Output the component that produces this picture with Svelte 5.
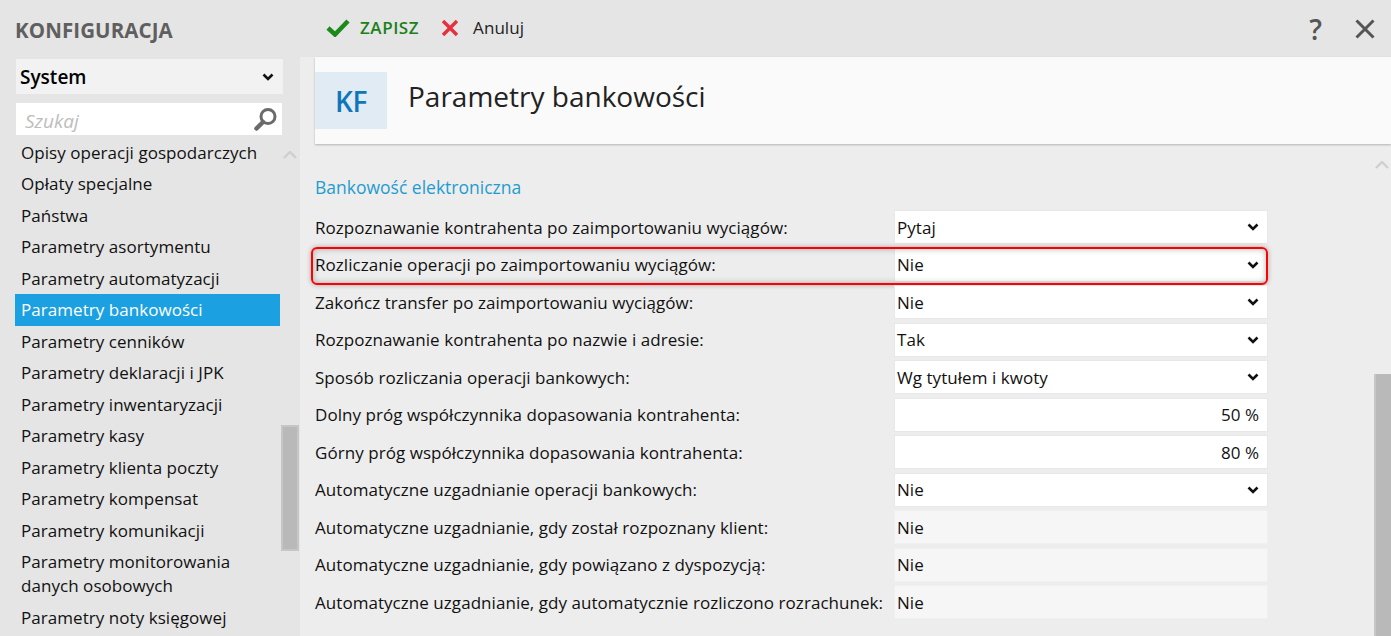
<script lang="ts">
  const menu = [
    'Opisy operacji gospodarczych',
    'Opłaty specjalne',
    'Państwa',
    'Parametry asortymentu',
    'Parametry automatyzacji',
    'Parametry bankowości',
    'Parametry cenników',
    'Parametry deklaracji i JPK',
    'Parametry inwentaryzacji',
    'Parametry kasy',
    'Parametry klienta poczty',
    'Parametry kompensat',
    'Parametry komunikacji',
    'Parametry monitorowania danych osobowych',
    'Parametry noty księgowej'
  ];

  const rows = [
    { label: 'Rozpoznawanie kontrahenta po zaimportowaniu wyciągów:', value: 'Pytaj', kind: 'select' },
    { label: 'Rozliczanie operacji po zaimportowaniu wyciągów:', value: 'Nie', kind: 'select', marked: true },
    { label: 'Zakończ transfer po zaimportowaniu wyciągów:', value: 'Nie', kind: 'select' },
    { label: 'Rozpoznawanie kontrahenta po nazwie i adresie:', value: 'Tak', kind: 'select' },
    { label: 'Sposób rozliczania operacji bankowych:', value: 'Wg tytułem i kwoty', kind: 'select' },
    { label: 'Dolny próg współczynnika dopasowania kontrahenta:', value: '50 %', kind: 'number' },
    { label: 'Górny próg współczynnika dopasowania kontrahenta:', value: '80 %', kind: 'number' },
    { label: 'Automatyczne uzgadnianie operacji bankowych:', value: 'Nie', kind: 'select' },
    { label: 'Automatyczne uzgadnianie, gdy został rozpoznany klient:', value: 'Nie', kind: 'readonly' },
    { label: 'Automatyczne uzgadnianie, gdy powiązano z dyspozycją:', value: 'Nie', kind: 'readonly' },
    { label: 'Automatyczne uzgadnianie, gdy automatycznie rozliczono rozrachunek:', value: 'Nie', kind: 'readonly' }
  ];
</script>

<div class="window">
  <aside class="sidebar">
    <h2>KONFIGURACJA</h2>
    <div class="module">
      <span>System</span>
      <svg class="chev" width="12" height="8" viewBox="0 0 12 8"><path d="M1.5 1.5 6 6l4.5-4.5" /></svg>
    </div>
    <div class="search">
      <span>Szukaj</span>
      <svg width="26" height="26" viewBox="0 0 26 26">
        <circle cx="15" cy="10.5" r="7" fill="none" stroke="#6a6a6a" stroke-width="3" />
        <path d="M10 16 3.5 22.5" stroke="#6a6a6a" stroke-width="4.5" stroke-linecap="round" />
      </svg>
    </div>
    <div class="list">
      <ul>
        {#each menu as item}
          <li class:active={item === 'Parametry bankowości'}>{item}</li>
        {/each}
      </ul>
      <div class="side-scroll">
        <svg class="up" width="14" height="8" viewBox="0 0 14 8"><path d="M1 7l6-6 6 6" /></svg>
        <div class="side-thumb"></div>
      </div>
    </div>
  </aside>

  <main class="content">
    <div class="toolbar">
      <button class="save">
        <svg width="24" height="18" viewBox="0 0 24 18"><path d="M2 9l7 6.5L22 2" /></svg>
        ZAPISZ
      </button>
      <button class="cancel">
        <svg width="18" height="18" viewBox="0 0 18 18"><path d="M2 2l14 14M16 2 2 16" /></svg>
        Anuluj
      </button>
      <div class="win-actions">
        <span class="help">?</span>
        <svg width="20" height="20" viewBox="0 0 20 20"><path d="M1.5 1.5l17 17M18.5 1.5l-17 17" /></svg>
      </div>
    </div>

    <div class="body">
      <header class="title">
        <div class="tile">KF</div>
        <h1>Parametry bankowości</h1>
      </header>

      <div class="form-wrap">
        <section class="form">
          <h3>Bankowość elektroniczna</h3>
          {#each rows as row}
            <div class="row" class:marked={row.marked}>
              <label>{row.label}</label>
              <div class="field {row.kind}">
                <span>{row.value}</span>
                {#if row.kind === 'select'}
                  <svg class="chev" width="12" height="8" viewBox="0 0 12 8"><path d="M1.5 1.5 6 6l4.5-4.5" /></svg>
                {/if}
              </div>
            </div>
          {/each}
        </section>
        <div class="main-scroll">
          <svg class="up" width="14" height="8" viewBox="0 0 14 8"><path d="M1 7l6-6 6 6" /></svg>
          <div class="main-thumb"></div>
        </div>
      </div>
    </div>
  </main>
</div>

<style>
  :global(body) {
    margin: 0;
  }

  .window {
    display: flex;
    width: 1391px;
    height: 636px;
    overflow: hidden;
    font-family: "Open Sans", "Noto Sans", sans-serif;
    font-size: 17px;
    letter-spacing: 0.05px;
    color: #111;
    background: #e5e5e5;
  }

  /* lewa kolumna */
  .sidebar {
    width: 300px;
    flex: none;
    box-sizing: border-box;
    padding: 0 0 0 15px;
  }

  .sidebar h2 {
    margin: 0;
    padding-top: 18px;
    height: 40px;
    font-size: 20.5px;
    line-height: 25px;
    font-weight: 700;
    color: #5f5f5f;
    letter-spacing: 0.1px;
  }

  .module {
    display: flex;
    align-items: center;
    justify-content: space-between;
    width: 267px;
    height: 35px;
    margin: 1px 0 0 1px;
    box-sizing: border-box;
    padding: 0 9px 0 4px;
    background: #f2f2f2;
    font-size: 19px;
    font-weight: 600;
    letter-spacing: 0;
    color: #000;
  }

  .search {
    display: flex;
    align-items: center;
    justify-content: space-between;
    width: 266px;
    height: 32px;
    margin: 9px 0 0 1px;
    box-sizing: border-box;
    padding: 0 3px 0 9px;
    background: #fff;
    font-style: italic;
    font-size: 19px;
    letter-spacing: 0;
    color: #bdbdbd;
  }

  .search span {
    padding-top: 3px;
  }

  .list {
    display: flex;
  }

  .list ul {
    list-style: none;
    margin: 0;
    padding: 1.5px 0 0;
    width: 265px;
  }

  .list li {
    padding: 4px 6px 3.5px;
    line-height: 24px;
  }

  .list li.active {
    background: #1ba1e2;
    color: #fff;
  }

  .side-scroll {
    flex: 1;
    margin-left: 1px;
  }

  .side-scroll .up {
    display: block;
    margin: 16px 0 0 2px;
  }

  .side-thumb {
    width: 18px;
    height: 126px;
    margin-top: 266px;
    box-sizing: border-box;
    background: #b9b9b9;
    border: 2px solid #c6c6c6;
  }

  .up path {
    fill: none;
    stroke: #cfcfcf;
    stroke-width: 2.4;
  }

  .chev path {
    fill: none;
    stroke: #111;
    stroke-width: 2.6;
  }

  /* prawa czesc */
  .content {
    flex: 1;
    min-width: 0;
    display: flex;
    flex-direction: column;
  }

  .toolbar {
    display: flex;
    align-items: center;
    height: 57px;
    flex: none;
    padding-left: 26px;
  }

  .toolbar button {
    display: flex;
    align-items: center;
    border: 0;
    padding: 0;
    background: none;
    font: inherit;
    letter-spacing: 0.05px;
    margin-top: -2px;
  }

  .toolbar .save {
    gap: 10px;
    font-weight: 600;
    letter-spacing: 0.55px;
    color: #1b7f1b;
  }

  .save svg path {
    fill: none;
    stroke: #1b8a1b;
    stroke-width: 4.5;
  }

  .cancel {
    gap: 14px;
    margin-left: 22px;
    color: #222;
  }

  .cancel svg path {
    fill: none;
    stroke: #e8303c;
    stroke-width: 3.4;
  }

  .win-actions {
    margin-left: auto;
    display: flex;
    align-items: center;
    gap: 33px;
    padding-right: 16px;
  }

  .help {
    font-size: 28px;
    font-weight: 600;
    line-height: 1;
    letter-spacing: 0;
    color: #555;
  }

  .win-actions path {
    stroke: #555;
    stroke-width: 3;
  }

  .body {
    flex: 1;
    min-height: 0;
    background: #ededed;
    padding-left: 15px;
  }

  .title {
    display: flex;
    align-items: center;
    gap: 21px;
    height: 87px;
    background: #fafafa;
    box-shadow: 0 1px 2px rgba(0, 0, 0, 0.25);
  }

  .tile {
    display: flex;
    align-items: center;
    justify-content: center;
    width: 72px;
    height: 57px;
    background: #e1ebf3;
    color: #0f76bb;
    font-size: 28px;
    font-weight: 600;
    letter-spacing: -0.5px;
  }

  .title h1 {
    margin: 0 0 10px;
    font-size: 28px;
    font-weight: 400;
    letter-spacing: 0;
    color: #222;
  }

  .form-wrap {
    display: flex;
    justify-content: space-between;
  }

  .form {
    width: 953px;
  }

  .form h3 {
    margin: 0;
    padding-top: 30px;
    height: 34.5px;
    font-size: 17.5px;
    line-height: 26px;
    font-weight: 400;
    letter-spacing: 0;
    color: #1f9ccf;
  }

  .row {
    position: relative;
    display: flex;
    align-items: center;
    height: 37.5px;
  }

  .row.marked::after {
    content: "";
    position: absolute;
    left: -4px;
    right: 0;
    top: 1px;
    bottom: -1px;
    border: 2px solid #f00;
    border-radius: 6px;
    box-shadow: 0 0 5px rgba(0, 0, 0, 0.3), inset 0 0 6px rgba(0, 0, 0, 0.28);
  }

  .row label {
    width: 579px;
    flex: none;
    white-space: nowrap;
  }

  .field {
    display: flex;
    align-items: center;
    justify-content: space-between;
    width: 374px;
    height: 34px;
    box-sizing: border-box;
    padding: 0 8px 0 2px;
    background: #fff;
    border: 1px solid #e8e8e8;
  }

  .field.number {
    justify-content: flex-end;
  }

  .field.readonly {
    background: #f6f6f6;
    border-color: #f0f0f0;
  }

  .main-scroll {
    width: 17px;
    flex: none;
  }

  .main-scroll .up {
    display: block;
    margin: 17px 0 0 1px;
  }

  .main-thumb {
    height: 270px;
    margin-top: 205px;
    background: #b9b9b9;
    border-left: 2px solid #c6c6c6;
  }
</style>
